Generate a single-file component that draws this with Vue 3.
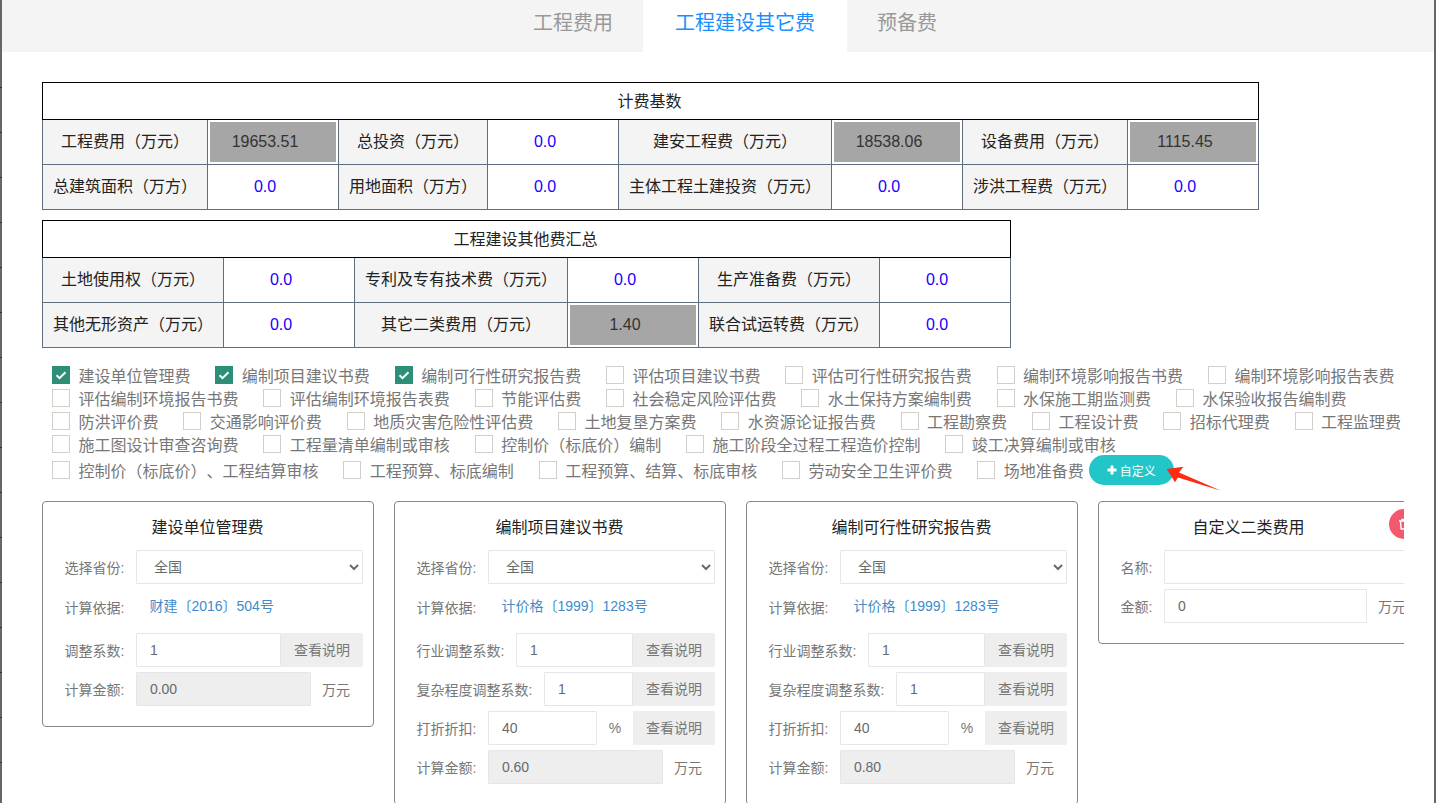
<script setup>
const table1 = [
  [
    { label: '工程费用（万元）' }, { value: '19653.51', gray: true },
    { label: '总投资（万元）' }, { value: '0.0' },
    { label: '建安工程费（万元）' }, { value: '18538.06', gray: true },
    { label: '设备费用（万元）' }, { value: '1115.45', gray: true },
  ],
  [
    { label: '总建筑面积（万方）' }, { value: '0.0' },
    { label: '用地面积（万方）' }, { value: '0.0' },
    { label: '主体工程土建投资（万元）' }, { value: '0.0' },
    { label: '涉洪工程费（万元）' }, { value: '0.0' },
  ],
]
const table2 = [
  [
    { label: '土地使用权（万元）' }, { value: '0.0' },
    { label: '专利及专有技术费（万元）' }, { value: '0.0' },
    { label: '生产准备费（万元）' }, { value: '0.0' },
  ],
  [
    { label: '其他无形资产（万元）' }, { value: '0.0' },
    { label: '其它二类费用（万元）' }, { value: '1.40', gray: true },
    { label: '联合试运转费（万元）' }, { value: '0.0' },
  ],
]
const widths1 = [165, 131, 149, 131, 213, 131, 165, 131]
const widths2 = [181, 131, 213, 131, 181, 131]

const fees = [
  ['建设单位管理费', true], ['编制项目建议书费', true], ['编制可行性研究报告费', true],
  ['评估项目建议书费'], ['评估可行性研究报告费'], ['编制环境影响报告书费'], ['编制环境影响报告表费'],
  ['评估编制环境报告书费'], ['评估编制环境报告表费'], ['节能评估费'], ['社会稳定风险评估费'],
  ['水土保持方案编制费'], ['水保施工期监测费'], ['水保验收报告编制费'],
  ['防洪评价费'], ['交通影响评价费'], ['地质灾害危险性评估费'], ['土地复垦方案费'], ['水资源论证报告费'],
  ['工程勘察费'], ['工程设计费'], ['招标代理费'], ['工程监理费'],
  ['施工图设计审查咨询费'], ['工程量清单编制或审核'], ['控制价（标底价）编制'], ['施工阶段全过程工程造价控制'],
  ['竣工决算编制或审核'],
  ['控制价（标底价）、工程结算审核'], ['工程预算、标底编制'], ['工程预算、结算、标底审核'],
  ['劳动安全卫生评价费'], ['场地准备费'],
]
</script>

<template>
  <div class="page">
    <div class="tabs">
      <a class="tab">工程费用</a>
      <a class="tab active">工程建设其它费</a>
      <a class="tab">预备费</a>
    </div>

    <div class="content">
      <table class="sum" :style="{ width: '1216px' }">
        <colgroup><col v-for="(w, i) in widths1" :key="i" :style="{ width: w + 'px' }" /></colgroup>
        <tr><th colspan="8" class="title">计费基数</th></tr>
        <tr v-for="(row, r) in table1" :key="r">
          <template v-for="(c, i) in row" :key="i">
            <td v-if="c.label" class="lab">{{ c.label }}</td>
            <td v-else class="val" :class="{ gray: c.gray }"><span>{{ c.value }}</span></td>
          </template>
        </tr>
      </table>

      <table class="sum second" :style="{ width: '968px' }">
        <colgroup><col v-for="(w, i) in widths2" :key="i" :style="{ width: w + 'px' }" /></colgroup>
        <tr><th colspan="6" class="title">工程建设其他费汇总</th></tr>
        <tr v-for="(row, r) in table2" :key="r">
          <template v-for="(c, i) in row" :key="i">
            <td v-if="c.label" class="lab">{{ c.label }}</td>
            <td v-else class="val" :class="{ gray: c.gray }"><span>{{ c.value }}</span></td>
          </template>
        </tr>
      </table>

      <div class="checks">
        <label v-for="f in fees" :key="f[0]" class="check">
          <span class="box" :class="{ on: f[1] }">
            <svg v-if="f[1]" viewBox="0 0 18 18" width="18" height="18"><path d="M4.5 9.2l3 3 6-6" fill="none" stroke="#fff" stroke-width="2" /></svg>
          </span>
          {{ f[0] }}
        </label>
        <div class="add-wrap">
          <button class="add">
            <svg viewBox="0 0 10 10" width="10" height="10"><path d="M3.6 0.5h2.8v3.1h3.1v2.8h-3.1v3.1h-2.8v-3.1h-3.1v-2.8h3.1z" fill="#fff" /></svg>
            自定义
          </button>
          <svg class="arrow" width="56" height="26" viewBox="0 0 56 26"><polygon points="0.7,3 17.3,0.7 13,6.5 55,24.7 12,11.5 9,16.3" fill="#ff2a12" /></svg>
        </div>
      </div>

      <div class="cards">
        <div class="card">
          <h4>建设单位管理费</h4>
          <div class="row"><span class="lbl">选择省份:</span><select class="ctl grow"><option>全国</option></select></div>
          <div class="row basis"><span class="lbl">计算依据:</span><a class="link">财建〔2016〕504号</a></div>
          <div class="row"><span class="lbl">调整系数:</span><input class="ctl grow" value="1" /><span class="btn">查看说明</span></div>
          <div class="row"><span class="lbl">计算金额:</span><input class="ctl amount" value="0.00" disabled /><span class="unit">万元</span></div>
        </div>

        <div v-for="t in [['编制项目建议书费', '0.60'], ['编制可行性研究报告费', '0.80']]" :key="t[0]" class="card">
          <h4>{{ t[0] }}</h4>
          <div class="row"><span class="lbl">选择省份:</span><select class="ctl grow"><option>全国</option></select></div>
          <div class="row basis"><span class="lbl">计算依据:</span><a class="link">计价格〔1999〕1283号</a></div>
          <div class="row"><span class="lbl">行业调整系数:</span><input class="ctl grow" value="1" /><span class="btn">查看说明</span></div>
          <div class="row"><span class="lbl">复杂程度调整系数:</span><input class="ctl grow" value="1" /><span class="btn">查看说明</span></div>
          <div class="row"><span class="lbl">打折折扣:</span><input class="ctl grow" value="40" /><span class="pct">%</span><span class="btn">查看说明</span></div>
          <div class="row"><span class="lbl">计算金额:</span><input class="ctl amount" :value="t[1]" disabled /><span class="unit">万元</span></div>
        </div>

        <div class="card custom">
          <h4>自定义二类费用</h4>
          <span class="del">
            <svg viewBox="0 0 12 12" width="12" height="12"><path d="M1 3h10M4 3V1.5h4V3M2.5 3l.6 8h5.8l.6-8" fill="none" stroke="#fff" stroke-width="1.4" /></svg>
          </span>
          <div class="row"><span class="lbl short">名称:</span><input class="ctl name" /></div>
          <div class="row"><span class="lbl short">金额:</span><input class="ctl money" value="0" /><span class="unit">万元</span></div>
        </div>
      </div>
    </div>
  </div>
</template>

<style scoped>
.page {
  width: 1436px;
  height: 803px;
  overflow: hidden;
  box-sizing: border-box;
  padding-left: 2px;
  border-right: 2px solid #666;
  background: repeating-linear-gradient(#666 0, #666 44px, #333 44px, #333 45px) left 43px / 2px 100% no-repeat, linear-gradient(#666, #666) left top / 2px 100% no-repeat, #fff;
  font-family: "Liberation Sans", "Noto Sans CJK SC", sans-serif;
  color: #333;
  text-spacing-trim: space-all;
}
.tabs {
  display: flex;
  height: 52px;
  padding-left: 499px;
  background: #f4f4f4;
}
.tab {
  margin-right: -2px;
  padding: 0 32px;
  font-size: 20px;
  line-height: 46px;
  color: #999;
}
.tab.active {
  background: #fff;
  color: #1890ff;
}
.content {
  width: 1362px;
  padding: 30px 0 0 40px;
  overflow: hidden;
}
table.sum {
  table-layout: fixed;
  border-collapse: collapse;
  font-size: 16px;
}
table.second {
  margin-top: 10px;
}
.title {
  height: 33px;
  padding: 0 2px 3px 0;
  border: 1px solid #000;
  font-size: 16px;
  font-weight: 400;
  color: #222;
}
td {
  height: 44px;
  padding: 0;
  border: 1px solid #5f6f80;
  text-align: center;
}
.lab {
  height: 40px;
  padding-bottom: 4px;
  background: #f4f4f4;
  color: #222;
}
.val {
  padding-right: 16px;
  color: #1a00ff;
}
.val.gray {
  height: 40px;
  padding: 2px;
  color: #333;
}
.val.gray span {
  display: block;
  padding-right: 16px;
  line-height: 40px;
  background: #a6a6a6;
}
.checks {
  display: flex;
  flex-wrap: wrap;
  align-items: center;
  margin: 15px -25px 0 0;
  padding-left: 10px;
  font-size: 16px;
  color: #777;
}
.check {
  display: flex;
  align-items: center;
  height: 23px;
  margin-right: 24.8px;
}
.box {
  flex: none;
  width: 18px;
  height: 18px;
  margin-right: 8.5px;
  box-sizing: border-box;
  border: 1px solid #d2cfcb;
}
.box.on {
  background: #2d8f78;
  border: 0;
}
.box svg {
  display: block;
}
.check:nth-last-child(2) {
  margin-right: 5px;
}
.add-wrap {
  position: relative;
  height: 30px;
}
.add {
  display: flex;
  align-items: center;
  justify-content: center;
  gap: 3px;
  width: 85px;
  height: 30px;
  padding: 0;
  border: 0;
  border-radius: 15px;
  background: #23c6c8;
  color: #fff;
  font-family: inherit;
  font-size: 12px;
}
.arrow {
  position: absolute;
  top: 11px;
  left: 77px;
}
.cards {
  display: flex;
  gap: 20px;
  margin-top: 16px;
  font-size: 14px;
  color: #777;
}
.card {
  position: relative;
  flex: none;
  align-self: flex-start;
  width: 332px;
  box-sizing: border-box;
  padding: 0 10px 20px 21.5px;
  border: 1px solid #888;
  border-radius: 4px;
}
.card h4 {
  margin: 0 -10px 0 -21.5px;
  height: 48px;
  padding-right: 1px;
  line-height: 52px;
  font-size: 16px;
  font-weight: 400;
  text-align: center;
  color: #222;
}
.custom h4 {
  padding-right: 31px;
}
.row {
  display: flex;
  align-items: center;
  height: 34px;
  margin-bottom: 5px;
}
.row:last-child {
  margin-bottom: 0;
}
.basis {
  height: 39px;
}
.basis .lbl {
  margin-top: -3px;
}
.lbl {
  flex: none;
  margin-right: 11.5px;
}
.lbl.short {
  width: 32px;
}
.link {
  margin: -8px 0 0 13.5px;
  color: #428bca;
}
.ctl {
  box-sizing: border-box;
  height: 34px;
  min-width: 0;
  padding: 0 13px;
  border: 1px solid #e5e6e7;
  border-radius: 1px;
  background: #fff;
  color: #676a6c;
  font-family: inherit;
  font-size: 14px;
  outline: none;
}
select.ctl {
  padding: 0 0 0 13px;
}
.grow {
  flex: 1;
}
.btn {
  flex: none;
  width: 82px;
  line-height: 34px;
  background: #eee;
  border-radius: 0 2px 2px 0;
  text-align: center;
}
.pct {
  flex: none;
  width: 36px;
  text-align: center;
}
.amount {
  width: 175px;
  background: #eee;
}
.unit {
  flex: none;
  margin-left: 11px;
}
.name {
  width: 300px;
  flex: none;
}
.money {
  width: 203px;
  flex: none;
}
.del {
  position: absolute;
  top: 7px;
  left: 290px;
  display: flex;
  align-items: center;
  justify-content: center;
  width: 30px;
  height: 30px;
  border-radius: 50%;
  background: #f2596e;
}
</style>

<style>
html, body {
  margin: 0;
  overflow: hidden;
}
</style>
